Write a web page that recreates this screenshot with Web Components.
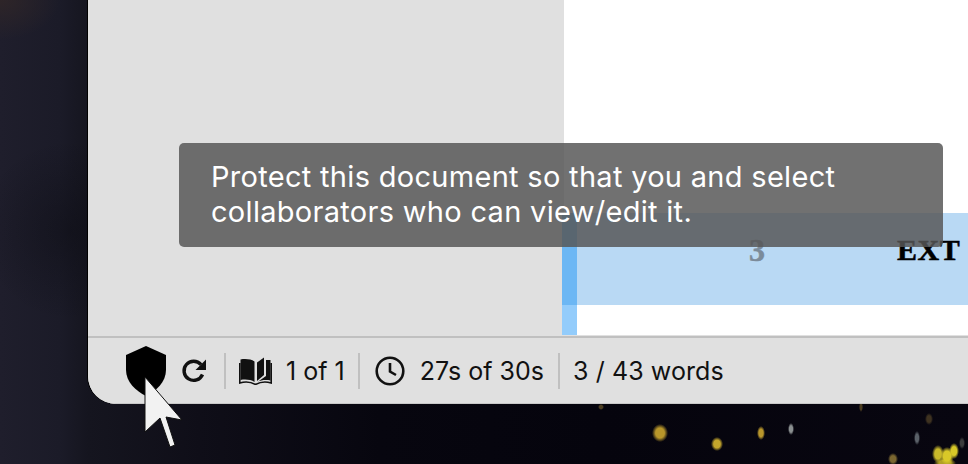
<!DOCTYPE html>
<html><head><meta charset="utf-8"><style>
html,body{margin:0;height:100%}
body{width:968px;height:464px;overflow:hidden;font-family:Inter,"Noto Sans",sans-serif}
</style></head><body>
<desk-top>
  <app-window>
    <side-pane slot="side"></side-pane>
    <script-page slot="page" num="3" text="EXT"></script-page>
    <status-bar slot="status"></status-bar>
    <info-tip slot="over">Protect this document so that you and select collaborators who can view/edit it.</info-tip>
  </app-window>
  <mouse-cursor></mouse-cursor>
</desk-top>
<script>
function def(name, html){
  customElements.define(name, class extends HTMLElement{
    constructor(){super();this.attachShadow({mode:'open'}).innerHTML=typeof html==='function'?html(this):html;}
  });
}
const sparks=[[660,433,8,9,'#b8962a'],[717,444,6,7,'#c4a62c'],[761,433,4,7,'#b8962c'],[791,429,3,6,'#8a8f90'],[917,438,3,7,'#5a6068'],[893,459,5,6,'#7a6630'],[929,419,4,6,'#3e3220'],[861,407,2,5,'#4a3c20'],[601,407,3,3,'#4a3c20'],[962,443,3,6,'#3c3c3c'],[938,454,6,9,'#c8b82a'],[947,456,7,9,'#d8c828'],[954,451,5,8,'#d8c828'],[945,463,11,5,'#b0a024']];
def('desk-top',`<style>
:host{display:block;position:relative;width:968px;height:464px;overflow:hidden;
 background:
 ${sparks.map(s=>`radial-gradient(${s[2]}px ${s[3]}px at ${s[0]}px ${s[1]}px,${s[4]} 55%,transparent 100%)`).join(',')},
 radial-gradient(60px 40px at 0 0,#2e2528,transparent),
 radial-gradient(90px 90px at 70px 230px,rgba(10,10,16,.4),transparent),
 linear-gradient(90deg,#1f1e2c 0,#1b1b28 60px,#15151f 88px,#0f0e18 200px,#07060f 380px,#05040d 600px,#080610 968px);}
</style><slot></slot>`);
def('app-window',`<style>
:host{display:block;width:880px;height:404px;margin-left:88px;position:relative;box-shadow:-1px 0 0 #000;border-radius:0 0 0 28px}
.clip{display:grid;grid-template-columns:476px 1fr;grid-template-rows:336px 68px;height:404px;background:#e0e0e0;border-radius:0 0 0 28px;overflow:hidden}
::slotted([slot=status]){grid-column:1/3}
</style><div class="clip"><slot name="side"></slot><slot name="page"></slot><slot name="status"></slot></div><slot name="over"></slot>`);
def('side-pane',`<style>:host{display:block;background:#e0e0e0}</style>`);
def('script-page',el=>`<style>
:host{display:flex;flex-direction:column;background:#fff;min-width:0;height:335px}
.top{height:213px;flex:none}
.row{height:92px;flex:none;display:flex;background:#b9d9f4}
.rail{width:15px;margin-left:-2px;background:#6cb7f4;flex:none}
.rail2{width:15px;margin-left:-2px;height:30px;background:#93ccfb}
.n{width:188px;flex:none;text-align:right;box-sizing:border-box;color:#7b8b9a;font:bold 32px/74px "Liberation Serif",serif;-webkit-text-stroke:.5px #7b8b9a}
.t{margin-left:132px;color:#000;font:bold 30px/74px "Liberation Serif",serif;letter-spacing:.5px;-webkit-text-stroke:.5px #000;white-space:nowrap}
</style><div class="top"></div><div class="row"><div class="rail"></div><span class="n">${el.getAttribute('num')}</span><span class="t">${el.getAttribute('text')}</span></div><div class="rail2"></div>`);
def('status-bar',`<style>
:host{display:flex;align-items:center;box-sizing:border-box;height:68px;background:#e0e0e0;border-top:2px solid #c0c0c0;border-bottom:1px solid #c8c8c8;padding-left:38px;color:#111;font-size:25px;white-space:nowrap}
.sep{width:2px;height:36px;background:#c0c0c0;flex:none}
svg{display:block;flex:none}
span{line-height:1;margin-top:2px}
</style>
<svg width="40" height="50" viewBox="0 0 40 50"><path d="M20 0 L40 9 V24 C40 36 30 45 20 50 C10 45 0 36 0 24 V9 Z" fill="#000"/></svg>
<svg width="26" height="26" viewBox="0 0 26 26" style="margin-left:15px"><path d="M21.500 16.500A9.600 9.600 0 1 1 20 6.600" fill="none" stroke="#111" stroke-width="3.400"/><path d="M25 1.500V12H14.500Z" fill="#111"/></svg>
<div class="sep" style="margin-left:17px"></div>
<svg width="33" height="28" viewBox="0 0 33 28" style="margin-left:13px"><path d="M15.500 4.500C12 2 6 1.500 1.500 2.500V23C6 22 12 22.500 15.500 25Z" fill="#111"/><path d="M18 5.500L25 .5V18L18 24Z" fill="#111"/><path d="M27 3H31.500V23.500C27 22.500 22 23 18.500 25L27 19Z" fill="#111"/><path d="M.8 6V26C6 24.500 12 25 16.500 27.500C21 25 27 24.500 32.200 26V6" fill="none" stroke="#111" stroke-width="1.600"/></svg>
<span style="margin-left:14px">1 of 1</span>
<div class="sep" style="margin-left:13px"></div>
<svg width="30" height="30" viewBox="0 0 30 30" style="margin-left:15px"><circle cx="15" cy="15" r="13.300" fill="none" stroke="#111" stroke-width="2.600"/><path d="M15 7V15.500L21 19" fill="none" stroke="#111" stroke-width="2.600"/></svg>
<span style="margin-left:15px">27s of 30s</span>
<div class="sep" style="margin-left:14px"></div>
<span style="margin-left:13px;letter-spacing:.1px">3 / 43 words</span>`);
def('info-tip',`<style>
:host{position:absolute;left:91px;top:143px;width:764px;height:104px;box-sizing:border-box;padding:17px 32px;background:rgba(86,86,86,.84);color:#fff;border-radius:5px;font-size:29px;letter-spacing:.3px;line-height:34.500px}
</style><slot></slot>`);
def('mouse-cursor',`<style>:host{position:absolute;left:140px;top:376px;width:44px;height:72px}svg{display:block}</style>
<svg width="44" height="72" viewBox="0 0 44 72"><path d="M5 1V56L20 42L30 71L35 69L26 41L42 44Z" fill="#f2f2f2" stroke="#111" stroke-width="1" stroke-linejoin="round"/></svg>`);
</script>
</body></html>
